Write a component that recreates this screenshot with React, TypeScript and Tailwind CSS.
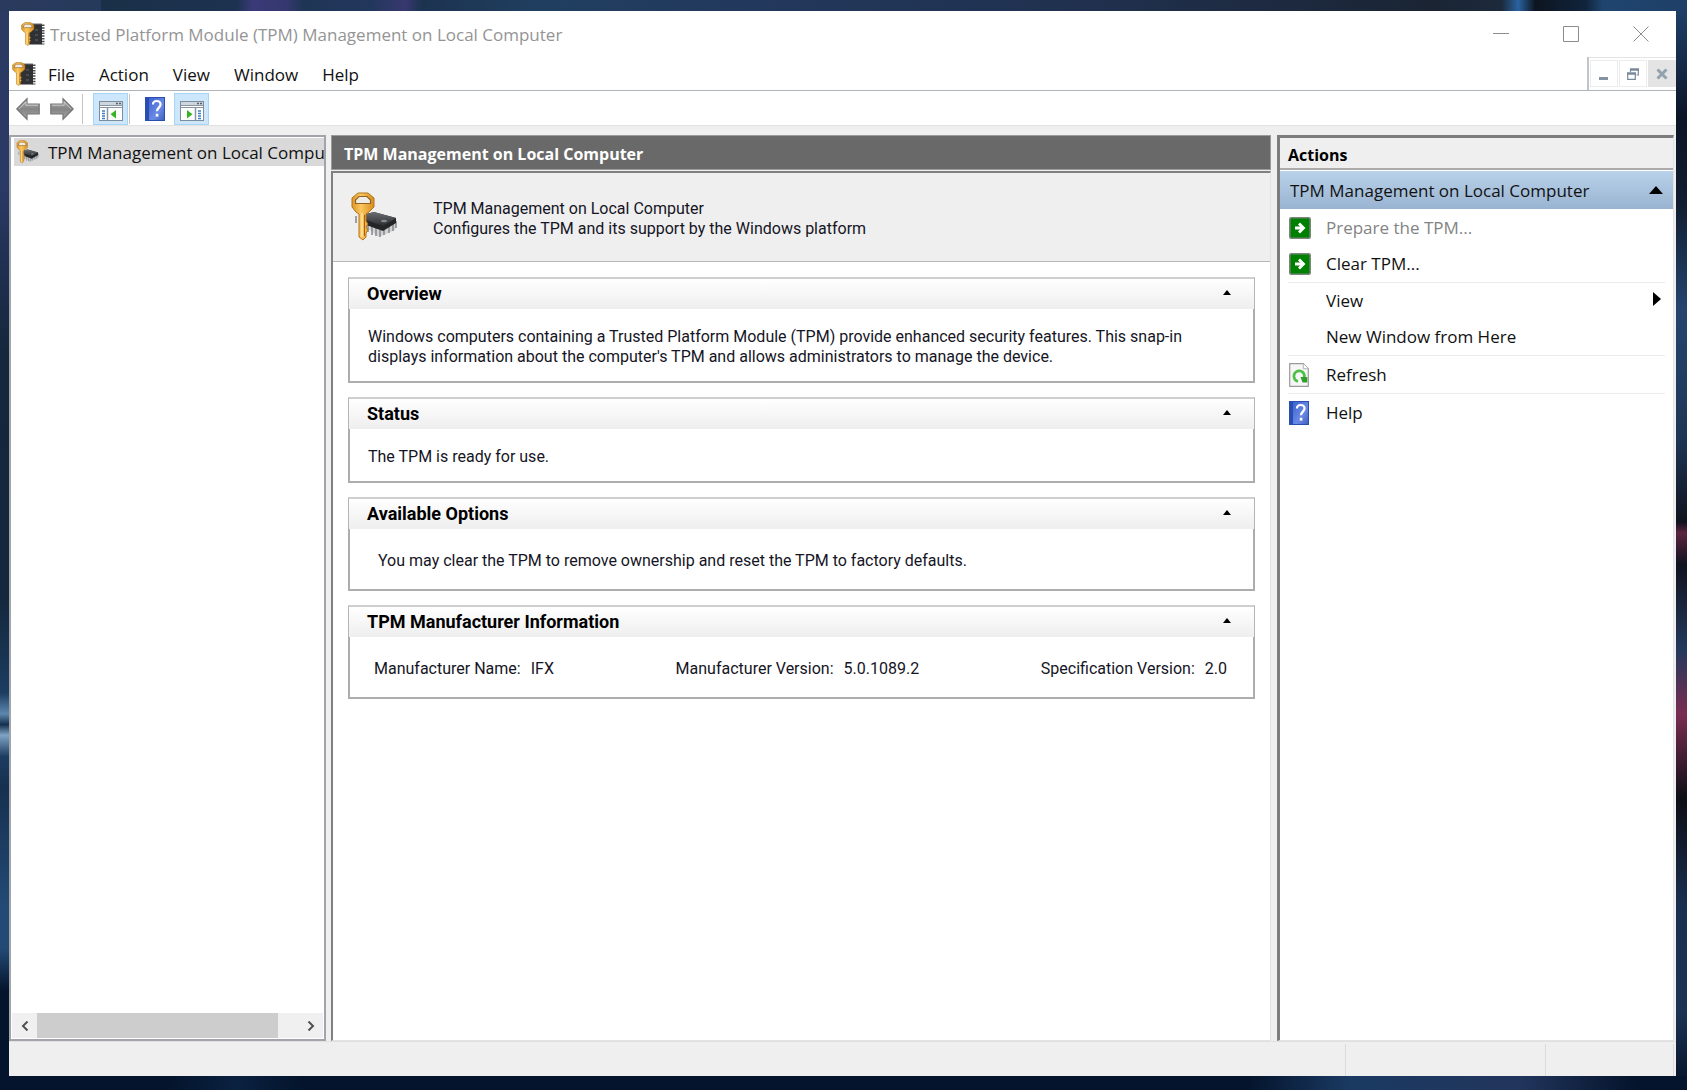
import { useState } from 'react';
import type { ReactNode } from 'react';

const menus = ['File', 'Action', 'View', 'Window', 'Help'];

function IconDefs() {
  return (
    <svg className="absolute h-0 w-0" aria-hidden="true">
      <defs>
        <linearGradient id="gold" x1="0" x2="1">
          <stop offset="0" stopColor="#dd9526" />
          <stop offset="0.4" stopColor="#fbc85f" />
          <stop offset="1" stopColor="#d98c1c" />
        </linearGradient>
        <linearGradient id="chip" x1="0" x2="0" y1="0" y2="1">
          <stop offset="0" stopColor="#6c6f73" />
          <stop offset="1" stopColor="#2a2b2d" />
        </linearGradient>
        <linearGradient id="arrow" x1="0" x2="0" y1="0" y2="1">
          <stop offset="0" stopColor="#b8b8b8" />
          <stop offset="0.5" stopColor="#848484" />
          <stop offset="1" stopColor="#a8a8a8" />
        </linearGradient>
        <linearGradient id="help" x1="0" x2="1" y1="0" y2="1">
          <stop offset="0" stopColor="#3c62d0" />
          <stop offset="0.6" stopColor="#6a8ae6" />
          <stop offset="1" stopColor="#3f60bd" />
        </linearGradient>
      </defs>
    </svg>
  );
}

function KeyShape() {
  return (
    <g>
      <path
        d="M7 1h10l6 5v9l-5 5-3 2v7l2 3-2 3 2 3-2 3v4l-3 3-4-3V22l-3-2-4-5V6z"
        fill="url(#gold)"
        stroke="#b0741c"
        strokeWidth="1"
      />
      <path d="M8 4.500h8l3.500 3.500v3.500H4.500V8z" fill="#efece6" stroke="#8f6222" strokeWidth="1.200" />
      <path d="M11 21v24" stroke="#ffe3a0" strokeWidth="1.500" />
      <path d="M13.500 23v21" stroke="#a9640c" strokeWidth="1" />
    </g>
  );
}

function ModuleIcon() {
  return (
    <svg className="h-6 w-6 shrink-0" viewBox="0 0 24 24" aria-hidden="true">
      <path d="M22 2.500v20" stroke="#4c4c4c" strokeWidth="3" strokeDasharray="1.500 1.200" />
      <rect x="8" y="2" width="13" height="20.500" fill="#2f3134" />
      <path d="M8 2h13" stroke="#6a6d70" strokeWidth="1" />
      <path d="M14 8h3M14 13h3M14 18h3" stroke="#63676c" strokeWidth="1" />
      <g transform="scale(0.560 0.490)">
        <KeyShape />
      </g>
    </svg>
  );
}

function ChipIcon({ className }: { className: string }) {
  return (
    <svg className={className} viewBox="0 0 48 50" aria-hidden="true">
      <path d="M16 36l12 9 16-7 2-9z" fill="#9b9ea2" opacity="0.350" />
      <path d="M5 24v7M17 31v9M21 33v10M25 35v9M29 38v7M33 38v5M38 35v6M42 32v7M45 29v7" stroke="#8b8d91" strokeWidth="1.600" />
      <path d="M15 22l8-2 22 6v5l-13 8-17-6z" fill="#242527" />
      <path d="M15 22l8-2 22 6-13 8-17-6z" fill="url(#chip)" />
      <ellipse cx="33" cy="29" rx="3" ry="1.200" fill="#85898d" />
      <KeyShape />
    </svg>
  );
}

function ArrowIcon({ flip = false }: { flip?: boolean }) {
  return (
    <svg className={flip ? 'h-6 w-6 -scale-x-100' : 'h-6 w-6'} viewBox="0 0 24 24" aria-hidden="true">
      <path d="M0.800 12L11 1.800V7h12.200v10H11v5.200z" fill="url(#arrow)" stroke="#757575" strokeWidth="1.200" />
      <path d="M2.800 12L9.900 4.800V8.200h12.100" fill="none" stroke="#cfcfcf" strokeWidth="0.900" />
    </svg>
  );
}

function HelpIcon() {
  return (
    <svg className="h-6 w-5 shrink-0" viewBox="0 0 20 24" aria-hidden="true">
      <rect width="20" height="24" fill="#2a4db0" />
      <rect x="4" y="1" width="15" height="22" fill="url(#help)" />
      <path d="M8 7.500C8 5 9.500 4 11.700 4s3.800 1.200 3.800 3.500c0 3-3.500 3.300-3.500 6.800" fill="none" stroke="#fff" strokeWidth="2.200" />
      <rect x="10.800" y="16.800" width="2.600" height="2.800" fill="#fff" />
    </svg>
  );
}

function PaneIcon({ flip = false }: { flip?: boolean }) {
  return (
    <svg className="h-5 w-6" viewBox="0 0 24 20" aria-hidden="true">
      <rect x="0.500" y="0.500" width="23" height="19" fill="#fff" stroke="#7f8c99" />
      <rect x="1" y="1" width="22" height="3" fill="#cdd5de" />
      <path d="M1 4.500h22M1 6.500h22" stroke="#8995a3" />
      <path d="M17 2.500h2M20 2.500h2" stroke="#53606e" strokeWidth="1.500" />
      <g transform={flip ? 'matrix(-1 0 0 1 24 0)' : undefined}>
        <path d="M8.500 7v12.500" stroke="#8995a3" strokeWidth="1.500" />
        <path d="M3 10h3M3 12.500h3M3 15h3M3 17.500h3" stroke="#3f7fc4" strokeWidth="1.300" />
        <path d="M17 9v8.500L11.500 13.200z" fill="#35b420" />
      </g>
    </svg>
  );
}

function GoIcon() {
  return (
    <svg className="h-[22px] w-[22px] shrink-0" viewBox="0 0 22 22" aria-hidden="true">
      <rect x="0.800" y="0.800" width="20.400" height="20.400" rx="1.500" fill="#008000" stroke="#7a857a" strokeWidth="1.600" />
      <path d="M6 11h8M10 6.500l4.500 4.500-4.500 4.500" fill="none" stroke="#fff" strokeWidth="2.800" />
    </svg>
  );
}

function RefreshIcon() {
  return (
    <svg className="h-6 w-5 shrink-0" viewBox="0 0 20 24" aria-hidden="true">
      <path d="M0.700 0.700h13.600l5 5v17.600H0.700z" fill="#f6f6f6" stroke="#9b9b9b" strokeWidth="1.200" />
      <path d="M14.300 0.700v5h5" fill="#fff" stroke="#b5b5b5" />
      <path d="M9 18.300A5.300 5.300 0 1 1 15.300 14.500" fill="none" stroke="#4cc244" strokeWidth="2.800" />
      <path d="M11.500 14h6.800v5.500h-4.800z" fill="#2f9e2c" />
    </svg>
  );
}

function Section({ title, children }: { title: string; children: ReactNode }) {
  const [open, setOpen] = useState(true);

  return (
    <section>
      <h2>
        <button
          type="button"
          aria-expanded={open}
          onClick={() => setOpen(!open)}
          className="flex h-8 w-full items-center justify-between border border-b-0 border-t-2 border-[#b4b4b4] border-t-[#cfcfcf] bg-linear-to-b from-white to-[#eeeeee] pl-[18px] pr-[23px] text-lg font-bold text-black"
        >
          {title}
          <svg className="mb-1 h-[5px] w-2" viewBox="0 0 8 5" aria-hidden="true">
            <path d="M4 0l4 5H0z" />
          </svg>
        </button>
      </h2>
      {open && <div className="border-2 border-t-0 border-[#adadad] px-[18px] leading-5">{children}</div>}
    </section>
  );
}

function ActionRow({ icon, label, disabled = false, submenu = false }: { icon?: ReactNode; label: string; disabled?: boolean; submenu?: boolean }) {
  return (
    <button
      type="button"
      disabled={disabled}
      className="flex h-9 w-full items-center text-left disabled:text-[#838383]"
    >
      <span className="flex w-[38px] shrink-0 pl-px">{icon}</span>
      <span className="flex-1">{label}</span>
      {submenu && (
        <svg className="mb-1 mr-1 h-3.5 w-2" viewBox="0 0 8 14" aria-hidden="true">
          <path d="M0 0l8 7-8 7z" />
        </svg>
      )}
    </button>
  );
}

function Fact({ name, value }: { name: string; value: string }) {
  return (
    <div className="flex gap-2.5">
      <dt>{name}</dt>
      <dd>{value}</dd>
    </div>
  );
}

export default function App() {
  return (
    <div className="flex h-screen flex-col bg-[#04142c] font-['Open_Sans',sans-serif] text-[17px] text-[#111]">
      <IconDefs />
      {/* Desktop visible around the window */}
      <div className="h-[11px] shrink-0 bg-[linear-gradient(to_right,#2a3a5e_0%,#263a5c_6%,#1a3048_6%,#1c3250_14%,#3a3a78_15%,#35386e_17%,#1f3556_18%,#22375c_22%,#37386f_24%,#1c3350_25%,#203f60_32%,#22385c_45%,#20304e_65%,#1a2433_85%,#1c2a3c_89%,#2a62a0_90%,#0d1520_91%,#10243c_94%,#1f456e_95%,#1e3f68_100%)]" />
      <div className="flex min-h-0 flex-1">
        <div className="w-[9px] shrink-0 bg-[linear-gradient(to_bottom,#2a3a62_0%,#2a3a66_16%,#16263c_32%,#14273c_55%,#1c3c60_64%,#5d87ae_66%,#16304f_67%,#7fa3c4_68%,#1c3c60_70%,#16304f_73%,#234a75_84%,#234a75_88%,#04142c_92%)]" />

        <main className="flex min-w-0 flex-1 flex-col bg-[#efefef]">
          <header className="bg-white">
            <div className="flex h-[46px] items-center pl-3">
              <ModuleIcon />
              <h1 className="ml-[5px] flex-1 pt-0.5 text-[#949494]">Trusted Platform Module (TPM) Management on Local Computer</h1>
              <div className="flex items-center gap-[54px] pb-px pr-[27px]">
                <button type="button" aria-label="Minimize">
                  <svg className="h-4 w-4" viewBox="0 0 16 16" fill="none" stroke="#8c8c8c"><path d="M0 7.500h16" /></svg>
                </button>
                <button type="button" aria-label="Maximize">
                  <svg className="h-4 w-4" viewBox="0 0 16 16" fill="none" stroke="#8c8c8c"><path d="M0.500 0.500h15v15h-15z" /></svg>
                </button>
                <button type="button" aria-label="Close">
                  <svg className="h-4 w-4" viewBox="0 0 16 16" fill="none" stroke="#8c8c8c"><path d="M0.500 0.500l15 15M15.500 0.500l-15 15" /></svg>
                </button>
              </div>
            </div>

            <div className="flex h-[34px] border-b border-[#b0b5b9]">
              <nav className="flex flex-1 items-center border-r-2 border-[#c0c5c9] pl-[3px]">
                <ModuleIcon />
                <div className="ml-3 flex gap-6 pt-0.5">
                  {menus.map((menu) => (
                    <button key={menu} type="button">{menu}</button>
                  ))}
                </div>
              </nav>
              <div className="flex gap-px border-t border-[#e4e4e4] pb-[3px] pl-px pt-0.5">
                <button type="button" aria-label="Minimize child window" className="flex w-7 items-center justify-center border border-[#ececec] pt-1">
                  <svg className="h-3 w-3" viewBox="0 0 12 12"><path d="M1 7h9v3H1z" fill="#8492a2" /></svg>
                </button>
                <button type="button" aria-label="Restore child window" className="flex w-7 items-center justify-center border border-[#ececec]">
                  <svg className="h-3 w-3" viewBox="0 0 12 12" fill="none" stroke="#7a8999"><path d="M0.700 5.500h7.600v5.800H0.700zM3.500 4V1.500h7.800V7H9.500" strokeWidth="1.200" /><path d="M0 5.500h9M3 1.500h9" strokeWidth="2.400" /></svg>
                </button>
                <button type="button" aria-label="Close child window" className="flex w-7 items-center justify-center bg-[#e4e4e4]">
                  <svg className="h-3 w-3" viewBox="0 0 12 12" stroke="#93a1af" strokeWidth="3"><path d="M1.500 1.500l9 9M10.500 1.500l-9 9" /></svg>
                </button>
              </div>
            </div>

            <div className="flex h-[35px] items-center border-b border-[#e2e2e2] pl-[7px] pt-0.5">
              <button type="button" aria-label="Back"><ArrowIcon /></button>
              <button type="button" aria-label="Forward" className="ml-2.5"><ArrowIcon flip /></button>
              <span className="ml-2 h-[30px] w-px bg-[#c4c4c4]" />
              <button type="button" aria-label="Show or hide console tree" className="ml-2.5 flex h-8 w-[35px] items-center justify-center border border-[#a9d5f5] bg-[#cce6fb] pt-1"><PaneIcon /></button>
              <span className="ml-px h-[30px] w-px bg-[#c4c4c4]" />
              <button type="button" aria-label="Help" className="ml-[15px]"><HelpIcon /></button>
              <button type="button" aria-label="Show or hide action pane" className="ml-[9px] flex h-8 w-[35px] items-center justify-center border border-[#a9d5f5] bg-[#cce6fb] pt-1"><PaneIcon flip /></button>
            </div>
          </header>

          <div className="flex min-h-0 flex-1 gap-[5px] pr-0.5 pt-[9px]">
            <aside className="flex w-[317px] shrink-0 flex-col border-2 border-[#a1a4aa] bg-white">
              <div className="ml-[3px] mt-px flex h-7 items-center bg-[#d9d9d9] pl-0.5">
                <ChipIcon className="h-6 w-6 shrink-0" />
                <span className="ml-2 whitespace-nowrap pt-px">TPM Management on Local Compu</span>
              </div>
              <div className="mx-px mb-px mt-auto flex h-[25px] items-stretch justify-between bg-[#f0f0f0]">
                <button type="button" aria-label="Scroll left" className="flex w-[25px] items-center justify-center">
                  <svg className="h-2.5 w-2" viewBox="0 0 8 10" fill="none" stroke="#505050" strokeWidth="2"><path d="M6.500 0.500L2 5l4.500 4.500" /></svg>
                </button>
                <div className="mr-5 flex-1"><div className="h-full bg-[#cdcdcd]" /></div>
                <button type="button" aria-label="Scroll right" className="flex w-[25px] items-center justify-center">
                  <svg className="h-2.5 w-2" viewBox="0 0 8 10" fill="none" stroke="#505050" strokeWidth="2"><path d="M1.500 0.500L6 5 1.500 9.500" /></svg>
                </button>
              </div>
            </aside>

            <section className="mr-px flex min-w-0 flex-1 flex-col">
              <h2 className="flex h-[35px] shrink-0 items-center border border-[#9a9a9a] bg-[#696969] pl-3 pt-0.5 text-base font-bold text-white">
                TPM Management on Local Computer
              </h2>
              <div className="mt-px flex-1 border-2 border-b border-r border-[#808080] border-b-[#e3e3e3] border-r-[#e3e3e3] bg-white font-['Roboto',sans-serif] text-base text-[#151525]">
                <div className="flex h-[89px] items-center border-b border-[#b8b8b8] bg-[#efefef] pl-[18px]">
                  <ChipIcon className="h-[50px] w-12 shrink-0" />
                  <p className="ml-[34px] pt-[3px] leading-5">
                    TPM Management on Local Computer
                    <br />
                    Configures the TPM and its support by the Windows platform
                  </p>
                </div>
                <div className="flex flex-col gap-3.5 px-[15px] pt-[15px]">
                  <Section title="Overview">
                    <p className="pb-3.5 pt-[18px]">
                      Windows computers containing a Trusted Platform Module (TPM) provide enhanced security features. This snap-in
                      displays information about the computer's TPM and allows administrators to manage the device.
                    </p>
                  </Section>
                  <Section title="Status">
                    <p className="pb-3.5 pt-[18px]">The TPM is ready for use.</p>
                  </Section>
                  <Section title="Available Options">
                    <p className="pb-[18px] pl-2.5 pt-[22px]">You may clear the TPM to remove ownership and reset the TPM to factory defaults.</p>
                  </Section>
                  <Section title="TPM Manufacturer Information">
                    <dl className="flex justify-between pb-[18px] pl-1.5 pr-2 pt-[22px]">
                      <Fact name="Manufacturer Name:" value="IFX" />
                      <Fact name="Manufacturer Version:" value="5.0.1089.2" />
                      <Fact name="Specification Version:" value="2.0" />
                    </dl>
                  </Section>
                </div>
              </div>
            </section>

            <aside className="flex w-[397px] shrink-0 flex-col border-[3px] border-b border-r border-[#7c7c7c] border-b-[#e3e3e3] border-r-[#e3e3e3] bg-white">
              <h2 className="flex h-8 items-center border-b-2 border-[#ababab] bg-[#efefef] pl-2 pt-1 text-base font-bold text-black">Actions</h2>
              <button type="button" className="mt-px flex h-[38px] items-center justify-between bg-linear-to-b from-[#b9d1ea] to-[#99b4d1] pl-2.5 pr-2.5">
                <span className="pt-0.5">TPM Management on Local Computer</span>
                <svg className="h-2 w-3.5" viewBox="0 0 14 8" aria-hidden="true"><path d="M7 0l7 8H0z" /></svg>
              </button>
              <div className="divide-y divide-[#ebebeb] px-2 pt-px">
                <div>
                  <ActionRow icon={<GoIcon />} label="Prepare the TPM..." disabled />
                  <ActionRow icon={<GoIcon />} label="Clear TPM..." />
                </div>
                <div>
                  <ActionRow label="View" submenu />
                  <ActionRow label="New Window from Here" />
                </div>
                <div className="pt-px">
                  <ActionRow icon={<RefreshIcon />} label="Refresh" />
                </div>
                <div className="pt-px">
                  <ActionRow icon={<HelpIcon />} label="Help" />
                </div>
              </div>
            </aside>
          </div>

          <footer className="flex h-[35px] shrink-0 justify-end border-t border-[#e0e0e0] pr-0.5 pt-0.5">
            <div className="w-[200px] border-l border-[#dcdcdc]" />
            <div className="w-[129px] border-x border-[#dcdcdc]" />
          </footer>
        </main>

        <div className="w-[11px] shrink-0 bg-[linear-gradient(to_bottom,#1e3f68_0%,#0c1526_10%,#111d30_18%,#25456f_28%,#1d3656_40%,#10131f_48%,#5a2440_49%,#10131f_52%,#24395c_60%,#7a2c52_66%,#0d0e16_74%,#1a2f50_84%,#1d3354_94%,#08162e_100%)]" />
      </div>
      <div className="h-3.5 shrink-0 bg-[linear-gradient(to_right,#04142c_0%,#04142c_10%,#0a2140_14%,#04142c_18%,#04142c_74%,#1a3a62_80%,#22355c_90%,#04142c_97%)]" />
    </div>
  );
}
